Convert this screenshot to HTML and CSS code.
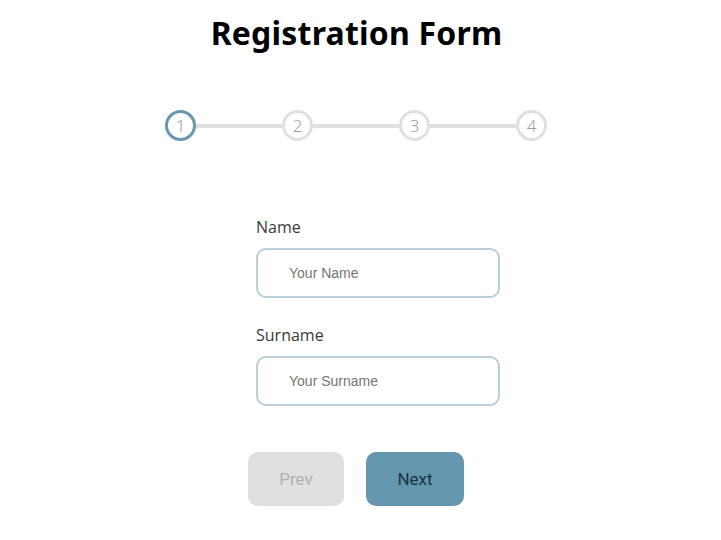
FILE: index.html
```html
<!DOCTYPE html>
<html>
<head>
<meta charset="utf-8">
<link rel="stylesheet" href="styles.css">
</head>
<body>
<div class="page">
  <h1 class="title">Registration Form</h1>
  <div class="stepper">
    <div class="step active">1</div>
    <div class="line"></div>
    <div class="step">2</div>
    <div class="line"></div>
    <div class="step">3</div>
    <div class="line"></div>
    <div class="step">4</div>
  </div>
  <form class="form">
    <label class="label">Name</label>
    <input class="field" type="text" placeholder="Your Name">
    <label class="label label-2">Surname</label>
    <input class="field" type="text" placeholder="Your Surname">
  </form>
  <div class="buttons">
    <button class="btn prev" type="button">Prev</button>
    <button class="btn next" type="button">Next</button>
  </div>
</div>
</body>
</html>
```
FILE: styles.css
```css
html, body {
  margin: 0;
  padding: 0;
  background: #ffffff;
}
.page {
  width: 721px;
  display: flex;
  flex-direction: column;
  align-items: flex-start;
}
.title {
  align-self: center;
  margin: 13px 0 0 -8px;
  font-family: "Noto Sans", sans-serif;
  font-weight: 700;
  font-size: 32px;
  line-height: 40px;
  color: #000;
  letter-spacing: 0.2px;
}
.stepper {
  margin: 57px 0 0 165px;
  display: flex;
  align-items: center;
}
.step {
  box-sizing: border-box;
  width: 31px;
  height: 31px;
  border-radius: 50%;
  border: 3px solid #e0e0e0;
  display: flex;
  align-items: center;
  justify-content: center;
  font-family: "Noto Sans", sans-serif;
  font-weight: 300;
  font-size: 17px;
  color: #a0a0a0;
  background: #fff;
}
.step.active {
  border-color: #6a97ae;
}
.line {
  width: 86px;
  height: 4px;
  background: #e0e0e0;
}
.form {
  margin: 76px 0 0 256px;
  display: flex;
  flex-direction: column;
  width: 244px;
}
.label {
  font-family: "Open Sans", sans-serif;
  font-weight: 400;
  font-size: 16px;
  line-height: 20px;
  color: #3a3a3a;
  margin-bottom: 11px;
}
.label-2 {
  margin-top: 27px;
}
.field {
  box-sizing: border-box;
  width: 244px;
  height: 50px;
  border: 2px solid #b9cfda;
  border-radius: 10px;
  padding: 0 0 0 31px;
  font-family: "Liberation Sans", Arial, sans-serif;
  font-size: 14px;
  color: #333;
  outline: none;
}
.field::placeholder {
  color: #757575;
}
.buttons {
  margin: 46px 0 0 248px;
  display: flex;
  gap: 22px;
}
.btn {
  height: 54px;
  border: none;
  border-radius: 10px;
  font-family: Roboto, sans-serif;
  font-size: 17px;
  font-weight: 400;
  cursor: pointer;
}
.prev {
  width: 96px;
  background: #e0e0e0;
  color: #b0b0b0;
}
.next {
  width: 98px;
  background: #6496b0;
  color: #1d3340;
}
```
